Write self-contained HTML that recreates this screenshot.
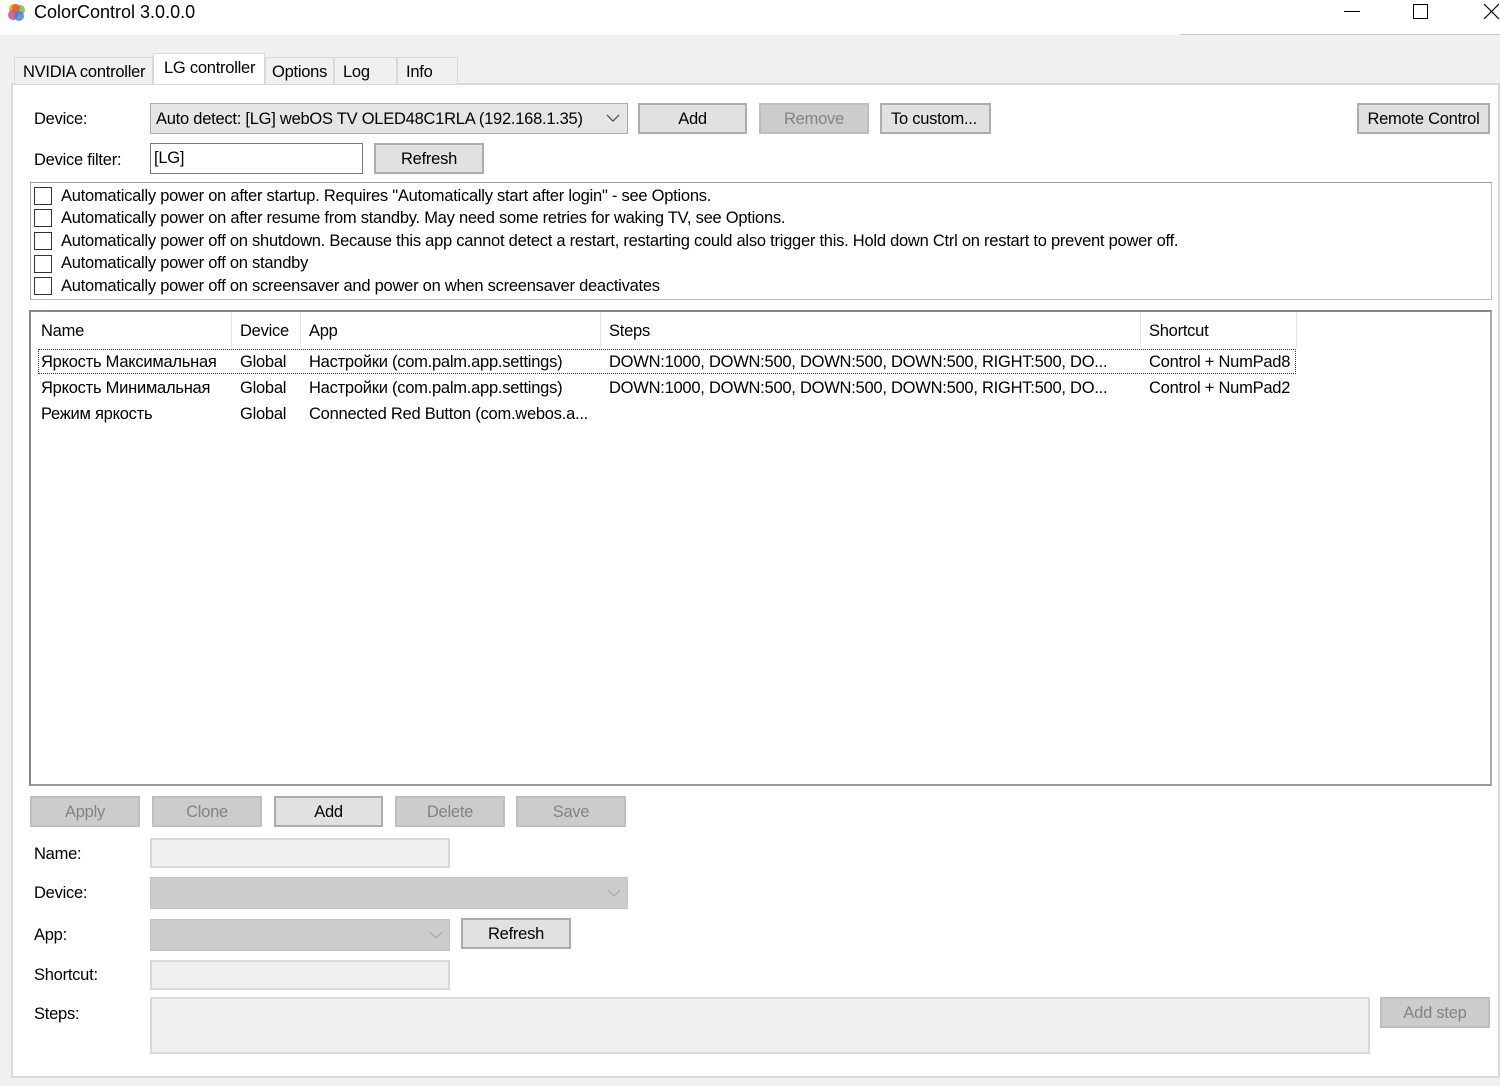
<!DOCTYPE html>
<html><head><meta charset="utf-8"><style>
*{box-sizing:border-box;margin:0;padding:0}
body{width:1500px;height:1086px;background:#f0f0f0;position:relative;overflow:hidden;font-family:"Liberation Sans","Noto Sans CJK SC",sans-serif;font-size:16.5px;letter-spacing:-0.25px;line-height:22px;color:#000}
.a{position:absolute;white-space:nowrap}
.btn{position:absolute;background:#e1e1e1;border:2px solid #adadad;text-align:center;height:31px;line-height:29px}
.dis{background:#cccccc;border-color:#bfbfbf;color:#838383}
.cb{position:absolute;left:34px;width:18px;height:18px;border:1.5px solid #333;background:#fff}
.tab{position:absolute;top:57px;height:27px;background:#f0f0f0;border:1px solid #d9d9d9;border-bottom:none;padding-left:8px;line-height:28px}
.lbl{position:absolute;left:34px}
.inp{position:absolute;background:#f0f0f0;border:2px solid #dadada}
.combo{position:absolute;background:#cccccc;border:1px solid #c4c4c4}
</style></head><body>
<div class="a" style="left:0;top:0;width:1500px;height:35px;background:#fff"></div>
<div class="a" style="left:1180px;top:34px;width:320px;height:1px;background:#c8c8c8"></div>
<svg class="a" style="left:6px;top:2px" width="22" height="22" viewBox="0 0 22 22"><circle cx="8" cy="7" r="5" fill="#f5a623"/><circle cx="14" cy="8" r="5" fill="#7ac143" opacity=".85"/><circle cx="7" cy="13" r="5" fill="#d94a8c" opacity=".85"/><circle cx="13" cy="14" r="5" fill="#3b7fd9" opacity=".8"/><circle cx="10" cy="6" r="4" fill="#e84b3c" opacity=".7"/></svg>
<div class="a" style="left:34px;top:1px;font-size:18px;letter-spacing:0">ColorControl 3.0.0.0</div>
<div class="a" style="left:1344px;top:11px;width:16px;height:1px;background:#000"></div>
<div class="a" style="left:1413px;top:4px;width:15px;height:15px;border:1px solid #000"></div>
<svg class="a" style="left:1483px;top:3px" width="17" height="17"><path d="M1 1L16 16M16 1L1 16" stroke="#000" stroke-width="1.2"/></svg>

<div class="a" style="left:11px;top:83px;width:1489px;height:995px;background:#fff;border:2px solid #dadada"></div>
<div class="tab" style="left:14px;width:139px">NVIDIA controller</div>
<div class="tab" style="left:153px;top:53px;height:31px;width:112px;background:#fff;border-color:#d9d9d9;padding-left:10px;line-height:29px">LG controller</div>
<div class="tab" style="left:265px;width:69px;padding-left:6px">Options</div>
<div class="tab" style="left:334px;width:63px">Log</div>
<div class="tab" style="left:397px;width:61px">Info</div>

<div class="lbl" style="top:108px">Device:</div>
<div class="a" style="left:150px;top:103px;width:478px;height:31px;background:#e5e5e5;border:1px solid #adadad;line-height:30px;padding-left:5px">Auto detect: [LG] webOS TV OLED48C1RLA (192.168.1.35)</div>
<svg class="a" style="left:606px;top:114px" width="14" height="9"><path d="M1 1L7 7L13 1" stroke="#444" fill="none" stroke-width="1.2"/></svg>
<div class="btn" style="left:638px;top:103px;width:109px">Add</div>
<div class="btn dis" style="left:759px;top:103px;width:110px">Remove</div>
<div class="btn" style="left:880px;top:103px;width:111px;text-align:left;padding-left:9px">To custom...</div>
<div class="btn" style="left:1357px;top:103px;width:133px">Remote Control</div>

<div class="lbl" style="top:149px">Device filter:</div>
<div class="a" style="left:150px;top:143px;width:213px;height:31px;border:1px solid #7a7a7a;background:#fff;line-height:29px;padding-left:3px">[LG]</div>
<div class="btn" style="left:374px;top:143px;width:110px">Refresh</div>

<div class="a" style="left:30px;top:182px;width:1462px;height:118px;border:1px solid #a0a0a0;border-right-color:#bbb;border-bottom-color:#bbb"></div>
<div class="cb" style="top:187px"></div><div class="a" style="left:61px;top:185px">Automatically power on after startup. Requires "Automatically start after login" - see Options.</div>
<div class="cb" style="top:209px"></div><div class="a" style="left:61px;top:207px">Automatically power on after resume from standby. May need some retries for waking TV, see Options.</div>
<div class="cb" style="top:232px"></div><div class="a" style="left:61px;top:230px">Automatically power off on shutdown. Because this app cannot detect a restart, restarting could also trigger this. Hold down Ctrl on restart to prevent power off.</div>
<div class="cb" style="top:255px"></div><div class="a" style="left:61px;top:252px">Automatically power off on standby</div>
<div class="cb" style="top:277px"></div><div class="a" style="left:61px;top:275px">Automatically power off on screensaver and power on when screensaver deactivates</div>

<div class="a" style="left:29px;top:310px;width:1463px;height:476px;border:2px solid #828790;border-right-color:#aaa;border-bottom-color:#999;background:#fff"></div>
<div class="a" style="left:231px;top:312px;width:1px;height:36px;background:#e5e5e5"></div>
<div class="a" style="left:300px;top:312px;width:1px;height:36px;background:#e5e5e5"></div>
<div class="a" style="left:600px;top:312px;width:1px;height:36px;background:#e5e5e5"></div>
<div class="a" style="left:1140px;top:312px;width:1px;height:36px;background:#e5e5e5"></div>
<div class="a" style="left:1296px;top:312px;width:1px;height:36px;background:#e5e5e5"></div>
<div class="a" style="left:41px;top:320px">Name</div>
<div class="a" style="left:240px;top:320px">Device</div>
<div class="a" style="left:309px;top:320px">App</div>
<div class="a" style="left:609px;top:320px">Steps</div>
<div class="a" style="left:1149px;top:320px">Shortcut</div>
<div class="a" style="left:38px;top:349px;width:1258px;height:25px;border:1px dotted #333"></div>
<div class="a" style="left:41px;top:351px">Яркость Максимальная</div>
<div class="a" style="left:240px;top:351px">Global</div>
<div class="a" style="left:309px;top:351px">Настройки (com.palm.app.settings)</div>
<div class="a" style="left:609px;top:351px">DOWN:1000, DOWN:500, DOWN:500, DOWN:500, RIGHT:500, DO...</div>
<div class="a" style="left:1149px;top:351px">Control + NumPad8</div>
<div class="a" style="left:41px;top:377px">Яркость Минимальная</div>
<div class="a" style="left:240px;top:377px">Global</div>
<div class="a" style="left:309px;top:377px">Настройки (com.palm.app.settings)</div>
<div class="a" style="left:609px;top:377px">DOWN:1000, DOWN:500, DOWN:500, DOWN:500, RIGHT:500, DO...</div>
<div class="a" style="left:1149px;top:377px">Control + NumPad2</div>
<div class="a" style="left:41px;top:403px">Режим яркость</div>
<div class="a" style="left:240px;top:403px">Global</div>
<div class="a" style="left:309px;top:403px">Connected Red Button (com.webos.a...</div>

<div class="btn dis" style="left:30px;top:796px;width:110px">Apply</div>
<div class="btn dis" style="left:152px;top:796px;width:110px">Clone</div>
<div class="btn" style="left:274px;top:796px;width:109px">Add</div>
<div class="btn dis" style="left:395px;top:796px;width:110px">Delete</div>
<div class="btn dis" style="left:516px;top:796px;width:110px">Save</div>

<div class="lbl" style="top:843px">Name:</div>
<div class="inp" style="left:150px;top:838px;width:300px;height:30px"></div>
<div class="lbl" style="top:882px">Device:</div>
<div class="combo" style="left:150px;top:877px;width:478px;height:32px"></div>
<svg class="a" style="left:607px;top:889px" width="14" height="9"><path d="M1 1L7 7L13 1" stroke="#aaa" fill="none" stroke-width="1.2"/></svg>
<div class="lbl" style="top:924px">App:</div>
<div class="combo" style="left:150px;top:919px;width:300px;height:32px"></div>
<svg class="a" style="left:429px;top:931px" width="14" height="9"><path d="M1 1L7 7L13 1" stroke="#aaa" fill="none" stroke-width="1.2"/></svg>
<div class="btn" style="left:461px;top:918px;width:110px">Refresh</div>
<div class="lbl" style="top:964px">Shortcut:</div>
<div class="inp" style="left:150px;top:960px;width:300px;height:30px"></div>
<div class="lbl" style="top:1003px">Steps:</div>
<div class="inp" style="left:150px;top:997px;width:1220px;height:57px"></div>
<div class="btn dis" style="left:1380px;top:997px;width:110px">Add step</div>
</body></html>
